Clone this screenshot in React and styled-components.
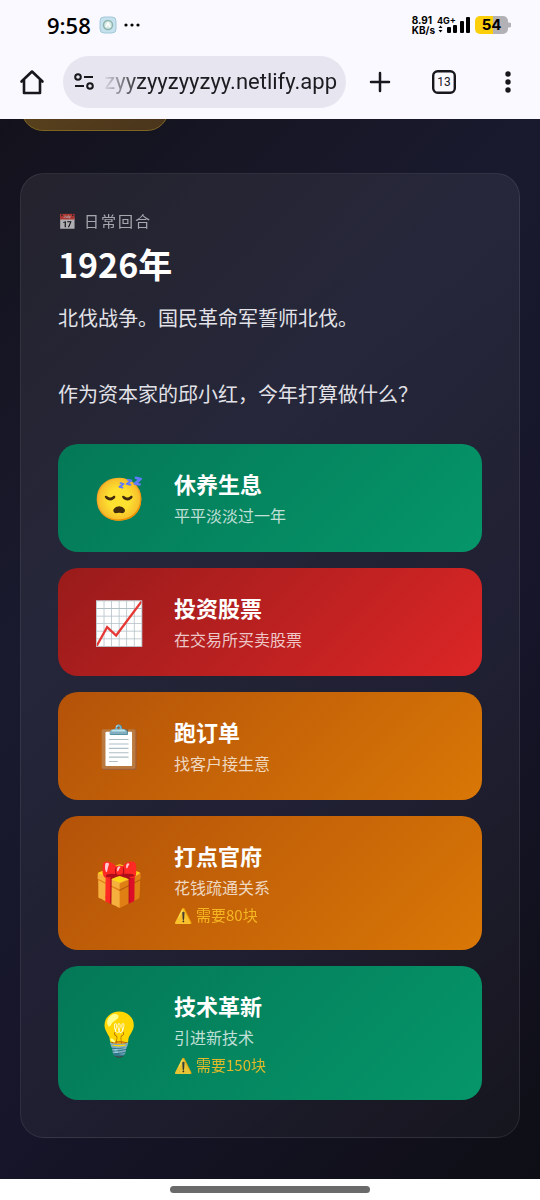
import React from 'react'
import styled, { createGlobalStyle } from "styled-components";

const GlobalStyle = createGlobalStyle`
*{
box-sizing:border-box;
}
body{
margin:0;
background-color:#ffffff;
font-family:"Noto Sans CJK SC", "Noto Color Emoji", sans-serif;
}
button{
font-family:inherit;
color:inherit;
border:none;
background:none;
padding:0;
cursor:pointer;
}
`;

const Screen = styled.div`
min-height:100vh;
display:flex;
flex-direction:column;
`;

const Browser = styled.header`
background-color:#faf9ff;
color:#17171c;
`;

const StatusBar = styled.div`
height:50px;
padding:0 29px 0 47px;
display:flex;
align-items:center;
justify-content:space-between;
color:#000000;

  .side{
  display:flex;
  align-items:center;
  }
`;

const Clock = styled.span`
font-family:"Open Sans", sans-serif;
font-size:22px;
font-weight:600;
line-height:30px;
margin-right:8px;
`;

const Speed = styled.span`
font-family:Inter, sans-serif;
font-size:10px;
font-weight:700;
line-height:10px;
margin-right:2px;
`;

const Battery = styled.span`
width:33px;
height:18px;
margin-left:4px;
border-radius:5px;
background:linear-gradient(90deg, #fccf0a 54%, #b1b1b6 54%);
font-family:Inter, sans-serif;
font-size:15px;
font-weight:700;
line-height:18px;
text-align:center;
`;

const Toolbar = styled.nav`
height:69px;
padding:0 16px 5px;
display:flex;
align-items:center;
`;

const IconButton = styled.button`
width:32px;
height:40px;
display:flex;
align-items:center;
justify-content:center;
flex-shrink:0;
`;

const Address = styled.div`
flex:1;
min-width:0;
height:52px;
margin:0 18px 0 15px;
padding:0 9px 0 5px;
border-radius:26px;
background-color:#e7e5f0;
display:flex;
align-items:center;

  input{
  flex:1;
  min-width:0;
  margin-left:2px;
  padding:0;
  border:none;
  outline:none;
  background:none;
  color:#1b1b20;
  font-family:Roboto, sans-serif;
  font-size:22px;
  line-height:30px;
  text-align:right;
  mask-image:linear-gradient(90deg, transparent, #000 40px);
  }
`;

const Actions = styled.div`
display:flex;
gap:32px;
`;

const Game = styled.main`
flex:1;
padding:0 20px 41px;
overflow:hidden;
background:linear-gradient(135deg, #13121c 0%, #191a2e 35%, #161529 65%, #0e0e15 100%);
`;

const MoneyTag = styled.div`
width:148px;
height:44px;
margin:-32px 0 42px 1px;
border:1px solid #7c6423;
border-radius:22px;
background:linear-gradient(135deg, #5a431b, #4a341c);
`;

const Card = styled.section`
padding:35px 37px 37px;
border:1px solid rgba(255,255,255,0.08);
border-radius:24px;
background:linear-gradient(145deg, rgba(255,255,255,0.07), rgba(255,255,255,0.03));
`;

const Tag = styled.div`
color:#ececf2;
opacity:0.65;
font-size:15px;
line-height:24px;
letter-spacing:2px;
`;

const Year = styled.h1`
margin:9px 0 13px;
color:#ffffff;
font-size:34px;
font-weight:700;
line-height:44px;
`;

const Story = styled.p`
margin:0 0 31px;
color:#e2e2e8;
font-size:20px;
line-height:38px;
white-space:pre-line;
`;

const Choices = styled.div`
display:flex;
flex-direction:column;
gap:16px;
`;

const colors = {
  green: "#047857, #059669",
  red: "#991b1b, #dc2626",
  orange: "#b45309, #d97706",
};

const Choice = styled.button`
width:100%;
padding:22px;
border-radius:20px;
background:linear-gradient(135deg, ${(props) => colors[props.$color]});
display:flex;
align-items:center;
gap:14px;
text-align:left;
`;

const Emoji = styled.span`
width:80px;
padding-top:4px;
flex-shrink:0;
font-family:"Noto Color Emoji", sans-serif;
font-size:42px;
line-height:60px;
text-align:center;
`;

const ChoiceText = styled.span`
display:flex;
flex-direction:column;

  .title{
  color:#ffffff;
  font-size:22px;
  font-weight:700;
  line-height:34px;
  }
  .desc{
  color:rgba(255,255,255,0.75);
  font-size:16px;
  line-height:30px;
  }
  .need{
  color:#fbbf24;
  font-size:15px;
  line-height:26px;
  opacity:0.9;
  }
`;

const GestureBar = styled.footer`
height:21px;
background-color:#ffffff;
display:flex;
align-items:center;
justify-content:center;

  span{
  width:37%;
  height:7px;
  border-radius:4px;
  background-color:#6a6a6a;
  }
`;

const choices = [
  { icon: "😴", title: "休养生息", desc: "平平淡淡过一年", color: "green" },
  { icon: "📈", title: "投资股票", desc: "在交易所买卖股票", color: "red" },
  { icon: "📋", title: "跑订单", desc: "找客户接生意", color: "orange" },
  { icon: "🎁", title: "打点官府", desc: "花钱疏通关系", need: "需要80块", color: "orange" },
  { icon: "💡", title: "技术革新", desc: "引进新技术", need: "需要150块", color: "green" },
];

const AppBadge = () => (
  <svg width="44" height="18" viewBox="0 0 44 18">
    <rect x="1" y="1" width="16" height="16" rx="4" fill="#c5e1ee" stroke="#a3c8d8" />
    <circle cx="9" cy="9" r="4.5" fill="#d9ebe4" stroke="#8db5b0" strokeWidth="1.5" />
    <path d="M7 11l2-4 2 4" fill="none" stroke="#ffffff" strokeWidth="1.4" />
    <circle cx="27" cy="9" r="1.6" />
    <circle cx="33" cy="9" r="1.6" />
    <circle cx="39" cy="9" r="1.6" />
  </svg>
);

const Signal = () => (
  <svg width="34" height="18" viewBox="0 0 34 18">
    <text x="0" y="8" fontFamily="Inter, sans-serif" fontSize="9" fontWeight="700">4G+</text>
    <path d="M1.500 12l2-2.500 2 2.500zM1.500 14l2 2.500 2-2.500z" />
    <rect x="10" y="11" width="4" height="6" rx="1" />
    <rect x="16" y="9" width="4" height="8" rx="1" />
    <rect x="23" y="5" width="4" height="12" rx="1" />
    <rect x="29" y="1" width="4" height="16" rx="1" />
  </svg>
);

const App = () => {
  return (
    <Screen>
      <GlobalStyle />
      <Browser>
        <StatusBar>
          <div className="side">
            <Clock>9:58</Clock>
            <AppBadge />
          </div>
          <div className="side">
            <Speed>8.91<br />KB/s</Speed>
            <Signal />
            <Battery>54</Battery>
            <svg width="3" height="6" viewBox="0 0 3 6">
              <path d="M0 0.500h1a2 2 0 0 1 0 5H0z" fill="#b1b1b6" />
            </svg>
          </div>
        </StatusBar>
        <Toolbar>
          <IconButton aria-label="主页">
            <svg width="26" height="26" viewBox="0 0 26 26" fill="none" stroke="currentColor" strokeWidth="2.6" strokeLinejoin="round" strokeLinecap="round">
              <path d="M2.500 12.500L13 2.500l10.500 10M5 11v13h16V11" />
            </svg>
          </IconButton>
          <Address>
            <IconButton aria-label="网站设置">
              <svg width="20" height="18" viewBox="0 0 20 18" fill="none" stroke="currentColor" strokeWidth="2">
                <circle cx="4" cy="4" r="2.800" />
                <path d="M10 4h9M1 13h9" />
                <circle cx="16" cy="13" r="2.800" />
              </svg>
            </IconButton>
            <input type="text" aria-label="网址" defaultValue="zyyzyyzyyzyy.netlify.app" />
          </Address>
          <Actions>
            <IconButton aria-label="新标签页">
              <svg width="22" height="22" viewBox="0 0 22 22" stroke="currentColor" strokeWidth="2.500" strokeLinecap="round">
                <path d="M11 2v18M2 11h18" />
              </svg>
            </IconButton>
            <IconButton aria-label="标签页">
              <svg width="24" height="24" viewBox="0 0 24 24">
                <rect x="1.200" y="1.200" width="21.600" height="21.600" rx="4.500" fill="none" stroke="currentColor" strokeWidth="2.400" />
                <text x="12" y="16" textAnchor="middle" fontFamily="Roboto, sans-serif" fontSize="12" fontWeight="400" fill="currentColor">13</text>
              </svg>
            </IconButton>
            <IconButton aria-label="更多">
              <svg width="6" height="22" viewBox="0 0 6 22" fill="currentColor">
                <circle cx="3" cy="3" r="2.700" />
                <circle cx="3" cy="11" r="2.700" />
                <circle cx="3" cy="19" r="2.700" />
              </svg>
            </IconButton>
          </Actions>
        </Toolbar>
      </Browser>

      <Game>
        <MoneyTag />
        <Card>
          <Tag>📅 日常回合</Tag>
          <Year>1926年</Year>
          <Story>{"北伐战争。国民革命军誓师北伐。\n\n作为资本家的邱小红，今年打算做什么？"}</Story>
          <Choices>
            {choices.map((item) => (
              <Choice key={item.title} $color={item.color}>
                <Emoji>{item.icon}</Emoji>
                <ChoiceText>
                  <span className="title">{item.title}</span>
                  <span className="desc">{item.desc}</span>
                  {item.need && <span className="need">⚠️ {item.need}</span>}
                </ChoiceText>
              </Choice>
            ))}
          </Choices>
        </Card>
      </Game>

      <GestureBar><span></span></GestureBar>
    </Screen>
  )
}

export default App
